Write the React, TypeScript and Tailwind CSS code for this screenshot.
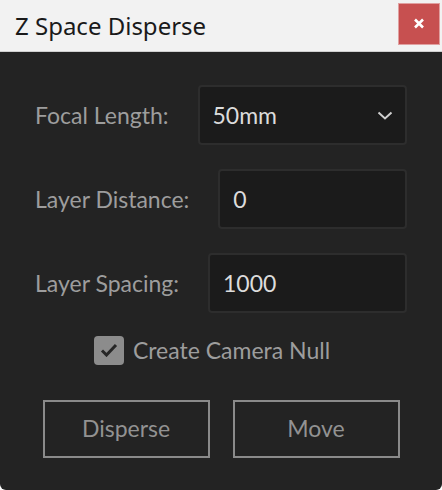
const font = { fontFamily: "Lato, 'Open Sans', sans-serif" };

function Field({ label, value, select }: { label: string; value: string; select?: boolean }) {
  return (
    <div className="flex items-center gap-[29px] px-[35px]">
      <span className="text-[23px] text-[#9d9d9d] whitespace-nowrap">{label}</span>
      <div className="flex-1 h-[60px] flex items-center justify-between pl-[13px] pr-[11px] bg-[#1b1b1b] border-2 border-[#2d2d2d] rounded-[4px]">
        <span className="text-[23px] text-[#dcdcdc]">{value}</span>
        {select && (
          <svg width="16" height="9" viewBox="0 0 16 9" className="mr-[1px]">
            <path d="M1.5 1.5 L8 7.5 L14.5 1.5" fill="none" stroke="#cfcfcf" strokeWidth="2" />
          </svg>
        )}
      </div>
    </div>
  );
}

export default function App() {
  return (
    <div className="w-[442px] h-[490px] flex flex-col bg-[#232323] rounded-b-[6px] overflow-hidden" style={font}>
      <div className="h-[52px] shrink-0 flex items-center justify-between bg-[#f2f2f2] border-b border-[#cfcfcf]">
        <span
          className="pl-[15px] text-[24px] text-[#1a1a1a]"
          style={{ fontFamily: "'Noto Sans', 'Open Sans', sans-serif" }}
        >
          Z Space Disperse
        </span>
        <div className="w-[42px] h-[42px] mr-[2px] mb-[4px] flex items-center justify-center bg-[#c75050] border border-[#e0a0a0]">
          <svg width="12" height="11" viewBox="0 0 12 11">
            <path d="M2 1.5 L10 9.5 M10 1.5 L2 9.5" stroke="#fff" strokeWidth="2.6" />
          </svg>
        </div>
      </div>

      <div className="flex flex-col pt-[33px] gap-[24px]">
        <Field label="Focal Length:" value="50mm" select />
        <Field label="Layer Distance:" value="0" />
        <Field label="Layer Spacing:" value="1000" />
      </div>

      <div className="flex items-center justify-center gap-[9px] mt-[20px] pr-[18px]">
        <div className="w-[30px] h-[29px] rounded-[4px] bg-[#8c8c8c] flex items-center justify-center">
          <svg width="18" height="14" viewBox="0 0 18 14">
            <path d="M2 7.5 L6.5 12 L16 2" fill="none" stroke="#262626" strokeWidth="3" />
          </svg>
        </div>
        <span className="text-[23px] text-[#9d9d9d]">Create Camera Null</span>
      </div>

      <div className="flex justify-center gap-[23px] mt-[32px]">
        <button className="w-[167px] h-[58px] border-2 border-[#8a8a8a] text-[23px] text-[#929292]">Disperse</button>
        <button className="w-[167px] h-[58px] border-2 border-[#8a8a8a] text-[23px] text-[#929292]">Move</button>
      </div>
    </div>
  );
}
